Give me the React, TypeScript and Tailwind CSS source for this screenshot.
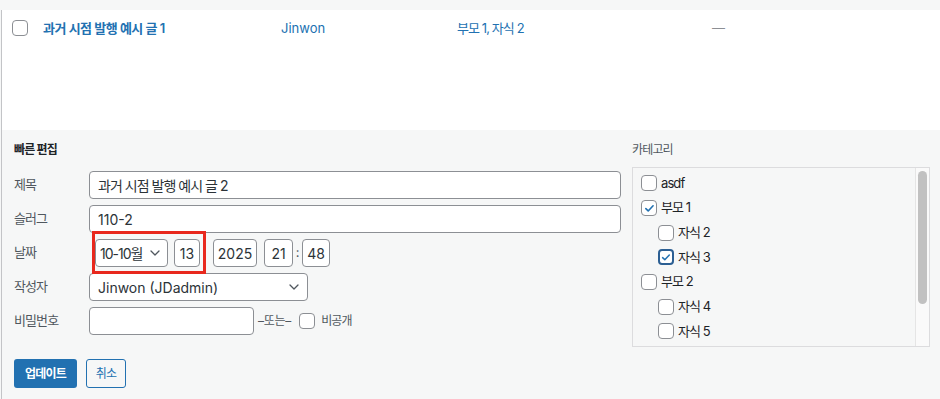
import clsx from "clsx";

const ko = "tracking-[-0.07em]";

function Check({ checked = false, focus = false }: { checked?: boolean; focus?: boolean }) {
  return (
    <span
      className={clsx(
        "flex h-4 w-4 shrink-0 items-center justify-center rounded-[4px] bg-white",
        focus ? "border-2 border-[#2c5f93]" : "border border-[#8c8f94]"
      )}
    >
      {checked && (
        <svg viewBox="0 0 16 16" className="h-[13px] w-[13px]">
          <path d="M3.5 8.2 6.4 11 12.4 4.6" fill="none" stroke="#2271b1" strokeWidth="2" strokeLinecap="round" strokeLinejoin="round" />
        </svg>
      )}
    </span>
  );
}

function Chevron() {
  return (
    <svg viewBox="0 0 10 6" className="h-[6px] w-[10px]">
      <path d="M1 1 5 5 9 1" fill="none" stroke="#50575e" strokeWidth="1.3" strokeLinecap="round" strokeLinejoin="round" />
    </svg>
  );
}

function Field({ label, children }: { label: string; children: React.ReactNode }) {
  return (
    <div className="flex items-center">
      <span className={clsx("w-[75px] shrink-0 text-[13px] text-[#50575e]", ko)}>{label}</span>
      {children}
    </div>
  );
}

const box = "flex h-[28px] items-center rounded-[4px] border border-[#8c8f94] bg-white text-[14px] text-[#2c3338]";

const categories = [
  { name: "asdf", child: false, checked: false },
  { name: "부모 1", child: false, checked: true },
  { name: "자식 2", child: true, checked: false },
  { name: "자식 3", child: true, checked: true, focus: true },
  { name: "부모 2", child: false, checked: false },
  { name: "자식 4", child: true, checked: false },
  { name: "자식 5", child: true, checked: false },
];

export default function App() {
  return (
    <div className="relative h-[399px] overflow-hidden bg-[#f6f7f7] pt-[10px] font-['Inter','Noto_Sans_CJK_KR',sans-serif]">
      <div className="ml-px h-full border-l border-[#c3c4c7]">
        {/* list row */}
        <div className="flex h-[120px] items-start bg-white pl-[10px] pt-[10px]">
          <div className="w-[31px]">
            <Check />
          </div>
          <a className="w-[238px] text-[13px] font-semibold leading-[16px] tracking-[-0.04em] text-[#2271b1]">과거 시점 발행 예시 글 1</a>
          <a className="w-[176px] text-[13px] leading-[16px] text-[#2271b1]">Jinwon</a>
          <span className={clsx("w-[255px] text-[13px] leading-[16px] text-[#2271b1]", ko)}>부모 1, 자식 2</span>
          <span className="text-[13px] leading-[16px] text-[#8c8f94]">—</span>
        </div>

        {/* quick edit */}
        <div className="flex pl-[12px] pr-[10px] pt-[10px]">
          <div className="w-[607px]">
            <div className={clsx("h-[20px] text-[12px] font-semibold leading-[20px] text-[#1d2327]", ko)}>빠른 편집</div>
            <div className="mt-[11px] flex flex-col gap-[6px]">
              <Field label="제목">
                <div className={clsx(box, "flex-1 px-[8px]")}>
                  <span className={ko}>과거 시점 발행 예시 글 2</span>
                </div>
              </Field>
              <Field label="슬러그">
                <div className={clsx(box, "flex-1 px-[8px]")}>110-2</div>
              </Field>
              <Field label="날짜">
                <div className="flex items-center pl-[6px]">
                  <div className={clsx(box, "w-[73px] justify-between pl-[4px] pr-[7px]")}>
                    <span className={ko}>10-10월</span>
                    <Chevron />
                  </div>
                  <div className={clsx(box, "ml-[6px] w-[26px] justify-center")}>13</div>
                  <div className={clsx(box, "ml-[13px] w-[44px] justify-center")}>2025</div>
                  <div className={clsx(box, "ml-[7px] w-[29px] justify-center")}>21</div>
                  <span className="w-[9px] text-center text-[13px] text-[#50575e]">:</span>
                  <div className={clsx(box, "w-[28px] justify-center")}>48</div>
                </div>
              </Field>
              <Field label="작성자">
                <div className={clsx(box, "w-[219px] justify-between pl-[8px] pr-[8px]")}>
                  <span>Jinwon (JDadmin)</span>
                  <Chevron />
                </div>
              </Field>
              <Field label="비밀번호">
                <div className={clsx(box, "w-[165px]")} />
                <span className="ml-[4px] text-[12px] tracking-[-0.02em] text-[#50575e]">–또는–</span>
                <span className="ml-[8px]">
                  <Check />
                </span>
                <span className={clsx("ml-[6px] text-[12px] text-[#50575e]", ko)}>비공개</span>
              </Field>
            </div>
            <div className="mt-[24px] flex items-center gap-[9px]">
              <button className={clsx("h-[29px] w-[63px] rounded-[3px] bg-[#2271b1] text-[12px] font-semibold text-white", ko)}>업데이트</button>
              <button className={clsx("h-[29px] w-[40px] rounded-[3px] border border-[#2271b1] bg-[#f6f7f7] text-[12px] text-[#2271b1]", ko)}>취소</button>
            </div>
          </div>

          <div className="ml-[11px] w-[298px]">
            <div className={clsx("h-[20px] text-[12px] leading-[20px] text-[#50575e]", ko)}>카테고리</div>
            <div className="mt-[7px] flex h-[180px] overflow-hidden border border-[#dcdcde] bg-[#f6f7f7]">
              <ul className="flex-1 pl-[8px] pt-[3px]">
                {categories.map((c) => (
                  <li key={c.name} className={clsx("flex h-[24.7px] items-center gap-[4px]", c.child && "pl-[17px]")}>
                    <Check checked={c.checked} focus={c.focus} />
                    <span className={clsx("text-[13px] text-[#1d2327]", ko)}>{c.name}</span>
                  </li>
                ))}
              </ul>
              <div className="w-[14px] border-l border-[#e5e5e5] bg-[#fafafa] px-[2px] pt-[3px]">
                <div className="h-[133px] rounded-full bg-[#c1c1c1]" />
              </div>
            </div>
          </div>
        </div>
      </div>

      {/* annotation */}
      <div className="absolute left-[92px] top-[231px] h-[43px] w-[114px] border-[3px] border-[#e8281d]" />
    </div>
  );
}
